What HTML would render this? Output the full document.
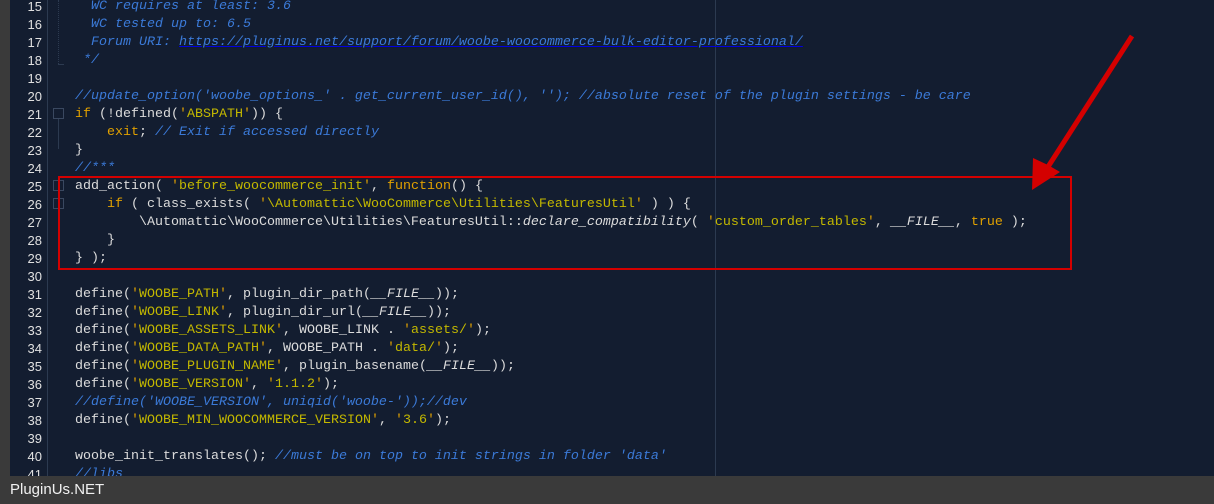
<!DOCTYPE html>
<html><head><meta charset="utf-8"><style>
body{margin:0;width:1214px;height:504px;overflow:hidden;background:#131d30;position:relative;font-family:"Liberation Mono",monospace;font-size:13.33px}
.l{position:absolute;left:75px;height:18px;line-height:18px;white-space:pre;color:#dcdcdc}
.n{position:absolute;left:10px;width:32px;text-align:right;height:18px;line-height:18px;color:#e0e0e0;font-family:"Liberation Sans",sans-serif;font-size:13px}
.c{color:#3b7ad8;font-style:italic}
.k{color:#e0a000}
.s{color:#c3b800}
.q{color:#e0a000}
.i{font-style:italic}
.u{text-decoration:underline;text-decoration-color:#0000e0}
</style></head><body>
<div style="position:absolute;left:0;top:0;width:10px;height:476px;background:#3a3a3a"></div>
<div style="position:absolute;left:47px;top:0;width:1px;height:476px;background:#2c3a50"></div>
<div style="position:absolute;left:715px;top:0;width:1px;height:476px;background:#2c3a50"></div>
<div style="position:absolute;left:58px;top:0;width:1px;height:64px;border-left:1px dotted #2c3a50"></div>
<div style="position:absolute;left:58px;top:64px;width:6px;height:1px;background:#2c3a50"></div>
<div style="position:absolute;left:53px;top:108px;width:9px;height:9px;border:1px solid #3a4860"></div>
<div style="position:absolute;left:58px;top:119px;height:30px;border-left:1px solid #2c3a50"></div>
<div style="position:absolute;left:53px;top:180px;width:9px;height:9px;border:1px solid #3a4860"></div>
<div style="position:absolute;left:53px;top:198px;width:9px;height:9px;border:1px solid #3a4860"></div>
<div style="position:absolute;left:58px;top:209px;height:50px;border-left:1px solid #2c3a50"></div>

<div id="code"></div>
<script>
var L={15:'  <span class="c">WC requires at least: 3.6</span>',
16:'  <span class="c">WC tested up to: 6.5</span>',
17:'  <span class="c">Forum URI: <span class="u">https://pluginus.net/support/forum/woobe-woocommerce-bulk-editor-professional/</span></span>',
18:' <span class="c">*/</span>',19:'',
20:'<span class="c">//update_option(\'woobe_options_\' . get_current_user_id(), \'\'); //absolute reset of the plugin settings - be care</span>',
21:'<span class="k">if</span> (!defined(<span class="q">\'</span><span class="s">ABSPATH</span><span class="q">\'</span>)) {',
22:'    <span class="k">exit</span>; <span class="c">// Exit if accessed directly</span>',
23:'}',24:'<span class="c">//***</span>',
25:'add_action( <span class="q">\'</span><span class="s">before_woocommerce_init</span><span class="q">\'</span>, <span class="k">function</span>() {',
26:'    <span class="k">if</span> ( class_exists( <span class="q">\'</span><span class="s">\\Automattic\\WooCommerce\\Utilities\\FeaturesUtil</span><span class="q">\'</span> ) ) {',
27:'        \\Automattic\\WooCommerce\\Utilities\\FeaturesUtil::<span class="i">declare_compatibility</span>( <span class="q">\'</span><span class="s">custom_order_tables</span><span class="q">\'</span>, <span class="i">__FILE__</span>, <span class="k">true</span> );',
28:'    }',29:'} );',30:'',
31:'define(<span class="q">\'</span><span class="s">WOOBE_PATH</span><span class="q">\'</span>, plugin_dir_path(<span class="i">__FILE__</span>));',
32:'define(<span class="q">\'</span><span class="s">WOOBE_LINK</span><span class="q">\'</span>, plugin_dir_url(<span class="i">__FILE__</span>));',
33:'define(<span class="q">\'</span><span class="s">WOOBE_ASSETS_LINK</span><span class="q">\'</span>, WOOBE_LINK . <span class="q">\'</span><span class="s">assets/</span><span class="q">\'</span>);',
34:'define(<span class="q">\'</span><span class="s">WOOBE_DATA_PATH</span><span class="q">\'</span>, WOOBE_PATH . <span class="q">\'</span><span class="s">data/</span><span class="q">\'</span>);',
35:'define(<span class="q">\'</span><span class="s">WOOBE_PLUGIN_NAME</span><span class="q">\'</span>, plugin_basename(<span class="i">__FILE__</span>));',
36:'define(<span class="q">\'</span><span class="s">WOOBE_VERSION</span><span class="q">\'</span>, <span class="q">\'</span><span class="s">1.1.2</span><span class="q">\'</span>);',
37:'<span class="c">//define(\'WOOBE_VERSION\', uniqid(\'woobe-\'));//dev</span>',
38:'define(<span class="q">\'</span><span class="s">WOOBE_MIN_WOOCOMMERCE_VERSION</span><span class="q">\'</span>, <span class="q">\'</span><span class="s">3.6</span><span class="q">\'</span>);',
39:'',40:'woobe_init_translates(); <span class="c">//must be on top to init strings in folder \'data\'</span>',
41:'<span class="c">//libs</span>'};
var h='';for(var n=15;n<=41;n++){var t=-2+(n-15)*18;h+='<div class="n" style="top:'+t+'px">'+n+'</div><div class="l" style="top:'+t+'px">'+L[n]+'</div>';}
document.getElementById('code').innerHTML=h;
</script>
<div style="position:absolute;left:58px;top:176px;width:1010px;height:90px;border:2px solid #d40000"></div>
<svg style="position:absolute;left:0;top:0" width="1214" height="504">
<line x1="1132" y1="36" x2="1046" y2="170" stroke="#d40000" stroke-width="5"/>
<polygon points="1032,190 1033,158 1048,165 1060,172" fill="#d40000"/>
</svg>
<div style="position:absolute;left:0;top:476px;width:1214px;height:28px;background:#3a3a3a;color:#f0f0f0;font-family:'Liberation Sans',sans-serif;font-size:15px;line-height:28px;padding-left:10px">PluginUs.NET</div>
</body></html>
